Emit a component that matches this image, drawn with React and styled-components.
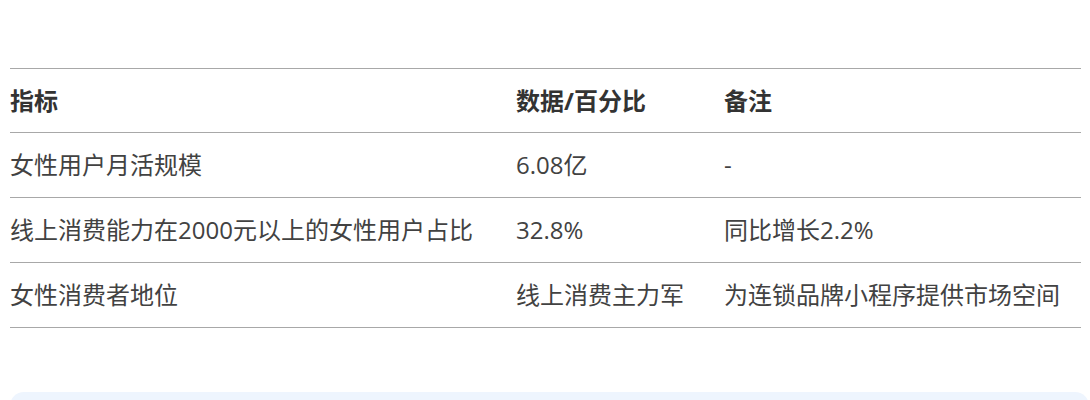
import React from "react";
import styled, { createGlobalStyle } from "styled-components";

const GlobalStyle = createGlobalStyle`
  html, body {
    margin: 0;
    padding: 0;
    background: #ffffff;
  }
  body {
    font-family: "Open Sans", "Noto Sans CJK SC", sans-serif;
  }
`;

const Page = styled.div`
  padding: 68px 1px 0 10px;
  display: flex;
  flex-direction: column;
`;

const Table = styled.div`
  display: grid;
  grid-template-columns: 506px 208px 1fr;
  margin-right: 8px;
  border-top: 1px solid #a8a8a8;
`;

const Cell = styled.div`
  display: flex;
  align-items: center;
  height: ${(p) => (p.$head ? 64 : 65)}px;
  box-sizing: border-box;
  border-bottom: 1px solid #a8a8a8;
  font-size: 24px;
  line-height: 36px;
  white-space: nowrap;
  color: ${(p) => (p.$head ? "#333333" : "#424242")};
  font-weight: ${(p) => (p.$head ? 700 : 400)};
`;

const Note = styled.div`
  margin-top: 64px;
  height: 60px;
  background: #eef5fe;
  border-radius: 14px;
`;

const header = ["指标", "数据/百分比", "备注"];
const rows = [
  ["女性用户月活规模", "6.08亿", "-"],
  ["线上消费能力在2000元以上的女性用户占比", "32.8%", "同比增长2.2%"],
  ["女性消费者地位", "线上消费主力军", "为连锁品牌小程序提供市场空间"],
];

export default function App() {
  return (
    <>
      <GlobalStyle />
      <Page>
        <Table>
          {header.map((h) => (
            <Cell key={h} $head>
              {h}
            </Cell>
          ))}
          {rows.map((r, i) =>
            r.map((c, j) => <Cell key={`${i}-${j}`}>{c}</Cell>)
          )}
        </Table>
        <Note />
      </Page>
    </>
  );
}
